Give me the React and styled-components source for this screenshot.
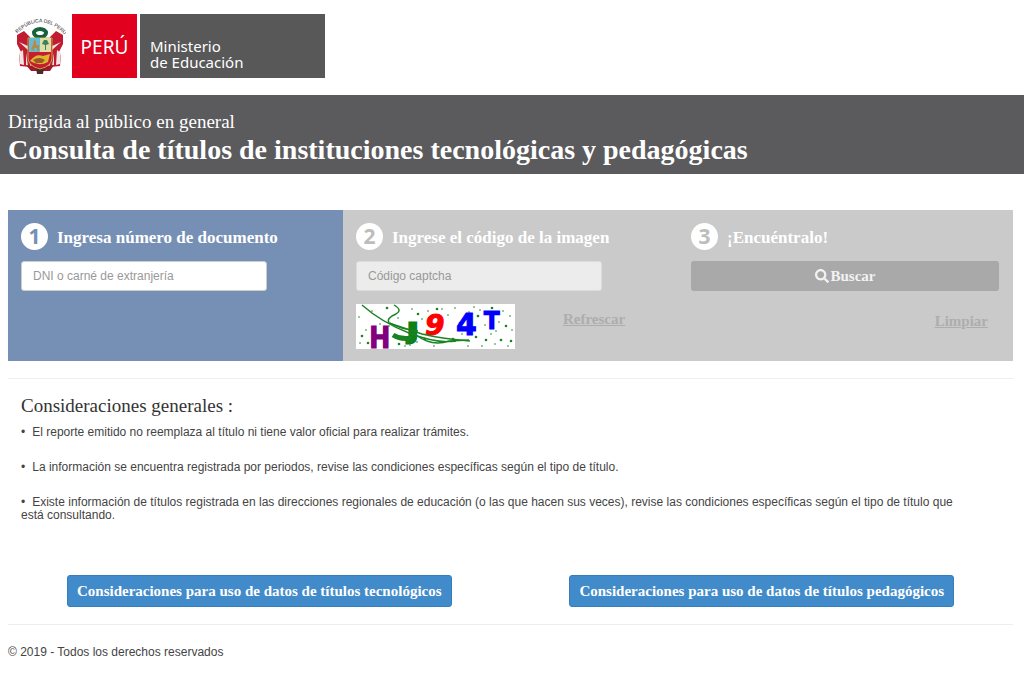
import React, { useState } from "react";
import styled, { createGlobalStyle } from "styled-components";
import { FaSearch } from "react-icons/fa";

const GlobalStyle = createGlobalStyle`
  * {
    box-sizing: border-box;
  }
  body {
    margin: 0;
    background: #fff;
    color: #444;
    font-family: "Liberation Sans", Arial, sans-serif;
    font-size: 12px;
  }
`;

const serif = `"Liberation Serif", "Times New Roman", serif`;

const Header = styled.header`
  display: flex;
  align-items: center;
  height: 95px;
  padding: 0 14px 4px;
`;

const Country = styled.span`
  display: flex;
  align-items: center;
  justify-content: center;
  width: 65px;
  height: 64px;
  margin: 0 3px 0 6px;
  padding-top: 2px;
  background: #e2001f;
  color: #fff;
  font-family: "Noto Sans", "Open Sans", sans-serif;
  font-size: 19px;
`;

const Ministry = styled.span`
  display: flex;
  flex-direction: column;
  justify-content: flex-end;
  width: 185px;
  height: 64px;
  padding: 0 10px 8px;
  background: #585858;
  color: #fff;
  font-family: "Noto Sans", "Open Sans", sans-serif;
  font-size: 15px;
  line-height: 16px;
`;

const Banner = styled.section`
  padding: 15px 8px 8px;
  background: #5b5a5d;
  color: #fff;
  font-family: ${serif};
`;

const Audience = styled.p`
  margin: 0;
  font-size: 19px;
  line-height: 24px;
`;

const Title = styled.h1`
  margin: 0;
  font-size: 28px;
  line-height: 32px;
`;

const Content = styled.main`
  margin: 36px 11px 0 8px;
`;

const Steps = styled.form`
  display: grid;
  grid-template-columns: repeat(3, 1fr);
`;

const Step = styled.section`
  padding: 13px 14px 12px 13px;
  background: ${({ $active }) => ($active ? "#768fb5" : "#cacaca")};
`;

const StepHeading = styled.h2`
  display: flex;
  align-items: center;
  gap: 9px;
  margin: 0 0 11px;
  color: #fff;
  font-family: ${serif};
  font-size: 17px;
  line-height: 27px;
`;

const StepTitle = styled.label`
  padding-top: 3px;
  line-height: 24px;
`;

const StepNumber = styled.span`
  display: flex;
  align-items: center;
  justify-content: center;
  width: 27px;
  height: 27px;
  border-radius: 50%;
  background: #fff;
  color: ${({ $active }) => ($active ? "#768fb5" : "#bdbdbd")};
  font-family: "Noto Sans", sans-serif;
  font-size: 21px;
`;

const Field = styled.input`
  display: block;
  width: 80%;
  height: 30px;
  padding: 0 11px;
  border: 1px solid ${({ $muted }) => ($muted ? "#dcdcdc" : "#ccc")};
  border-radius: 3px;
  background: ${({ $muted }) => ($muted ? "#ececec" : "#fff")};
  color: #555;
  font-family: inherit;
  font-size: 12px;
  &::placeholder {
    color: #999;
  }
`;

const SearchButton = styled.button`
  display: flex;
  align-items: center;
  justify-content: center;
  gap: 2px;
  width: 100%;
  height: 30px;
  border: 0;
  border-radius: 3px;
  background: #a9a9a9;
  color: #f2f2f2;
  font-family: ${serif};
  font-size: 15px;
  font-weight: bold;
`;

const CaptchaRow = styled.div`
  display: flex;
  align-items: flex-start;
  gap: 48px;
  padding-top: 13px;
`;

const ClearRow = styled.div`
  display: flex;
  justify-content: flex-end;
  padding: 20px 11px 0;
`;

const ActionLink = styled.a`
  color: #adadad;
  font-family: ${serif};
  font-size: 15px;
  font-weight: bold;
  line-height: 20px;
  text-decoration: underline;
`;

const RefreshLink = styled(ActionLink)`
  padding-top: 5px;
`;

const Rule = styled.hr`
  height: 1px;
  margin: 17px 0;
  border: 0;
  background: #eee;
`;

const Notes = styled.section`
  padding: 0 40px 0 13px;
`;

const NotesHeading = styled.h3`
  margin: 0;
  color: #333;
  font-family: ${serif};
  font-size: 19px;
  font-weight: normal;
  line-height: 20px;
`;

const NoteList = styled.ul`
  display: grid;
  gap: 22px;
  margin: 10px 0 0;
  padding: 0;
  list-style: none;
`;

const Note = styled.li`
  line-height: 13px;
  &::before {
    content: "•";
    margin-right: 7px;
  }
`;

const GuideRow = styled.div`
  display: grid;
  grid-template-columns: 1fr 1fr;
  justify-items: center;
  margin-top: 53px;
`;

const GuideButton = styled.button`
  height: 32px;
  padding: 0 9px;
  border: 1px solid #357ebd;
  border-radius: 3px;
  background: #428bca;
  color: #fff;
  font-family: ${serif};
  font-size: 15px;
  font-weight: bold;
`;

const Footer = styled.footer`
  line-height: 20px;
`;

const SPECKS = [
  [31, 4], [42, 14], [56, 5], [62, 10], [66, 15], [72, 7], [81, 5], [86, 5],
  [92, 11], [104, 19], [113, 8], [118, 3], [122, 12], [124, 6], [129, 21],
  [136, 4], [147, 7], [154, 12], [6, 32], [10, 26], [4, 39], [12, 39],
  [24, 20], [33, 22], [43, 40], [49, 42], [54, 41], [69, 35], [78, 42],
  [85, 24], [97, 35], [106, 30], [112, 42], [130, 36], [135, 30], [139, 40],
  [145, 36], [152, 42], [156, 26], [155, 37], [99, 4], [143, 18], [75, 15],
  [16, 7], [61, 38], [120, 33], [126, 42], [140, 27], [150, 22], [3, 13],
];

const Emblem = () => (
  <svg width="52" height="60" viewBox="0 0 52 60" role="img" aria-label="Escudo del Perú">
    <defs>
      <path id="arc" d="M3 18 Q26 -6 51 19" />
    </defs>
    <text
      fontFamily="Liberation Sans, sans-serif"
      fontSize="5"
      fill="#222"
      textAnchor="middle"
    >
      <textPath href="#arc" startOffset="50%">REPÚBLICA DEL PERÚ</textPath>
    </text>
    <path d="M3 19l7-4 6 6v30l-10-1-1-11 2-3-4-8zM49 19l-7-4-6 6v30l10-1 1-11-2-3 4-8z" fill="#c01b31" />
    <path d="M5 26l9 4v4zM47 26l-9 4v4z" fill="#efe0e0" />
    <path d="M5 37l4-3 1 15-4-1zM47 37l-4-3-1 15 4-1z" fill="#f2e6e4" />
    <path d="M12 37l2 13-2-1zM40 37l-2 13 2-1z" fill="#efe0e0" />
    <path d="M12 49l10 1 4 4 4-4 10-1-4 6H17z" fill="#9d192b" />
    <path d="M22 52h8l-1 6h-6z" fill="#4c2c2b" />
    <ellipse cx="26" cy="17" rx="6" ry="4" fill="none" stroke="#17613d" strokeWidth="4" />
    <path d="M14 22h24v20q0 8-12 11Q14 50 14 42z" fill="#c71c30" stroke="#c4a53c" strokeWidth="1" />
    <path d="M15 22h11v14H15z" fill="#68b9d0" />
    <path d="M26 22h11v14H26z" fill="#dedda9" />
    <path d="M17 33l2-4 1-5 2 1v4h3v6h-2v-3h-3v3z" fill="#b78a47" />
    <path d="M31 34v-5l-3-1 2-4h3l2 4-3 1v5z" fill="#3c8456" />
    <path d="M16 45q6-8 13-5l7-2-2 8q-9 5-18-1z" fill="#ddb52f" />
    <path d="M19 44q6-4 12 0l-3 3h-6z" fill="#9b5727" />
  </svg>
);

const Captcha = () => (
  <svg width="159" height="45" viewBox="0 0 159 45" role="img" aria-label="Imagen captcha">
    <rect width="159" height="45" fill="#fff" />
    {SPECKS.map(([x, y], i) => (
      <circle key={`${x}-${y}`} cx={x} cy={y} r={i % 3 ? 0.8 : 1.3} fill="#178322" />
    ))}
    <g fontFamily="DejaVu Sans, sans-serif" fontWeight="bold">
      <text x="14" y="43" fontSize="26" fill="#800080" stroke="#800080" fontWeight="normal" strokeWidth="3">H</text>
      <text x="129" y="24" fontSize="22" fill="#00f" stroke="#00f" fontWeight="normal" strokeWidth="3">T</text>
      <text x="100" y="31" fontSize="30" fill="#00f" stroke="#00f">4</text>
      <text x="69" y="31" fontSize="28" fill="red" stroke="red" fontStyle="italic">9</text>
      <text x="53" y="34" fontSize="20" fill="#108018" stroke="#108018" strokeWidth="5">J</text>
    </g>
    <g fill="none" stroke="#178322" strokeWidth="1.4">
      <path d="M6 1Q25 18 53 29T100 37" />
      <path d="M38 1q9 5 2 9-10 4-7 9l33 11q21 5 48 7" />
      <path d="M34 19q9 6 28 8M60 31q16 12 33 6l20-1" />
      <path d="M37 31q8 5 18 3" strokeWidth="5" />
    </g>
  </svg>
);

const App = () => {
  const [documentNumber, setDocumentNumber] = useState("");
  const [code, setCode] = useState("");

  const clearHandler = (e) => {
    e.preventDefault();
    setDocumentNumber("");
    setCode("");
  };

  return (
    <>
      <GlobalStyle />
      <Header>
        <Emblem />
        <Country>PERÚ</Country>
        <Ministry>
          <span>Ministerio</span>
          <span>de Educación</span>
        </Ministry>
      </Header>
      <Banner>
        <Audience>Dirigida al público en general</Audience>
        <Title>Consulta de títulos de instituciones tecnológicas y pedagógicas</Title>
      </Banner>
      <Content>
        <Steps onSubmit={(e) => e.preventDefault()}>
          <Step $active>
            <StepHeading>
              <StepNumber $active>1</StepNumber>
              <StepTitle htmlFor="document">Ingresa número de documento</StepTitle>
            </StepHeading>
            <Field
              id="document"
              placeholder="DNI o carné de extranjería"
              value={documentNumber}
              onChange={(e) => setDocumentNumber(e.target.value)}
            />
          </Step>
          <Step>
            <StepHeading>
              <StepNumber>2</StepNumber>
              <StepTitle htmlFor="captcha">Ingrese el código de la imagen</StepTitle>
            </StepHeading>
            <Field
              id="captcha"
              $muted
              placeholder="Código captcha"
              value={code}
              onChange={(e) => setCode(e.target.value)}
            />
            <CaptchaRow>
              <Captcha />
              <RefreshLink href="#captcha">Refrescar</RefreshLink>
            </CaptchaRow>
          </Step>
          <Step>
            <StepHeading>
              <StepNumber>3</StepNumber>
              <StepTitle htmlFor="search">¡Encuéntralo!</StepTitle>
            </StepHeading>
            <SearchButton id="search" type="submit">
              <FaSearch size={14} />
              Buscar
            </SearchButton>
            <ClearRow>
              <ActionLink href="#document" onClick={clearHandler}>
                Limpiar
              </ActionLink>
            </ClearRow>
          </Step>
        </Steps>
        <Rule />
        <Notes>
          <NotesHeading>Consideraciones generales :</NotesHeading>
          <NoteList>
            <Note>
              El reporte emitido no reemplaza al título ni tiene valor oficial para realizar trámites.
            </Note>
            <Note>
              La información se encuentra registrada por periodos, revise las condiciones específicas
              según el tipo de título.
            </Note>
            <Note>
              Existe información de títulos registrada en las direcciones regionales de educación (o
              las que hacen sus veces), revise las condiciones específicas según el tipo de título que
              está consultando.
            </Note>
          </NoteList>
        </Notes>
        <GuideRow>
          <GuideButton type="button">
            Consideraciones para uso de datos de títulos tecnológicos
          </GuideButton>
          <GuideButton type="button">
            Consideraciones para uso de datos de títulos pedagógicos
          </GuideButton>
        </GuideRow>
        <Rule />
        <Footer>© 2019 - Todos los derechos reservados</Footer>
      </Content>
    </>
  );
};

export default App;
